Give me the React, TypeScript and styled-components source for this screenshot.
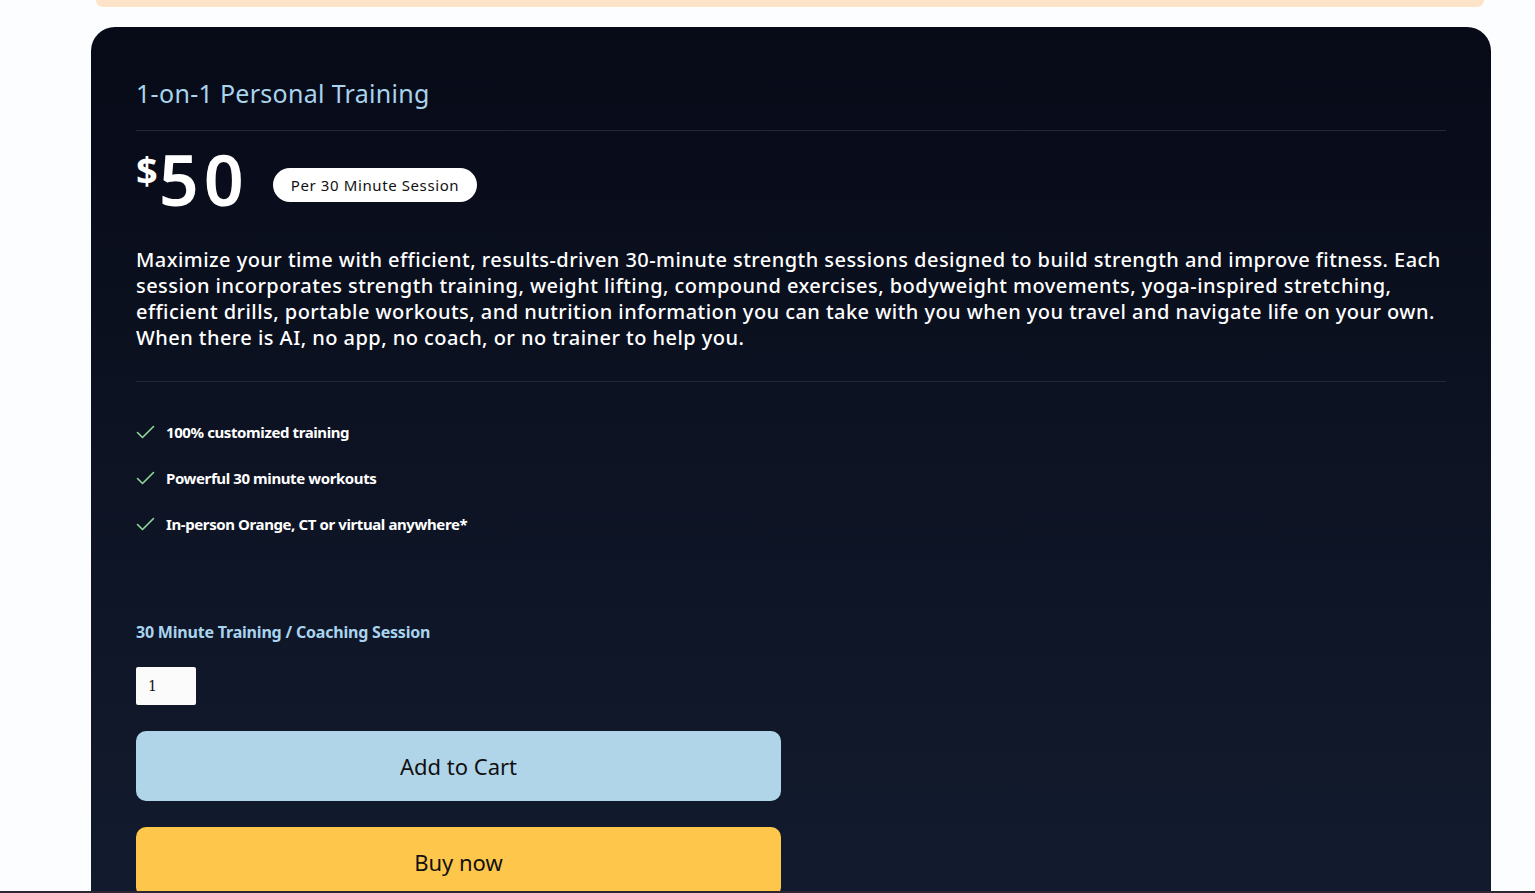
import React from "react";
import styled, { createGlobalStyle } from "styled-components";

const Global = createGlobalStyle`
  html, body { margin: 0; padding: 0; }
  body {
    background: #fcfdff;
    font-family: "Noto Sans", "Open Sans", sans-serif;
    overflow: hidden;
    height: 893px;
  }
`;

const Page = styled.div`
  display: flex;
  flex-direction: column;
  padding: 0 44px 0 91px;
  height: 893px;
`;

const PrevCard = styled.div`
  flex-shrink: 0;
  margin: 0 7px 0 5px;
  height: 7px;
  background: #fde3c8;
  border-radius: 0 0 20px 20px;
`;

const Card = styled.section`
  margin-top: 20px;
  flex: 1;
  border-radius: 24px 24px 0 0;
  background: linear-gradient(180deg, #070a17 0%, #0d1323 50%, #121b2e 100%);
  padding: 48px 45px 0;
  display: flex;
  flex-direction: column;
`;

const Title = styled.h2`
  margin: 0;
  font-family: "Noto Sans", sans-serif;
  font-weight: 400;
  font-size: 25px;
  line-height: 36px;
  color: #a9d4ee;
  letter-spacing: 0.3px;
`;

const Divider = styled.hr<{ $top: number; $bottom: number }>`
  border: 0;
  height: 1px;
  background: #222838;
  margin: ${(p) => `${p.$top}px 0 ${p.$bottom}px`};
`;

const PriceRow = styled.div`
  display: flex;
  align-items: center;
  gap: 24px;
`;

const Price = styled.div`
  display: flex;
  align-items: flex-start;
  color: #fff;
  font-weight: 700;
`;

const Dollar = styled.span`
  font-size: 38px;
  line-height: 40px;
  margin-top: 11px;
  margin-right: 1px;
`;

const Amount = styled.span`
  font-size: 70px;
  line-height: 80px;
  font-weight: 600;
  letter-spacing: 5px;
`;

const Pill = styled.span`
  background: #fff;
  color: #111;
  border-radius: 18px;
  padding: 0 18px;
  height: 34px;
  display: inline-flex;
  align-items: center;
  font-size: 15px;
  letter-spacing: 0.6px;
  margin-top: 12px;
`;

const Description = styled.p`
  margin: 28px 0 0;
  color: #fff;
  font-size: 20px;
  line-height: 26px;
  font-weight: 500;
  letter-spacing: 0.45px;
`;

const Features = styled.ul`
  list-style: none;
  margin: 0;
  padding: 0;
  display: flex;
  flex-direction: column;
  gap: 24px;
`;

const Feature = styled.li`
  display: flex;
  align-items: center;
  gap: 11px;
  color: #fff;
  font-weight: 700;
  font-size: 15px;
  line-height: 22px;
  letter-spacing: -0.4px;
`;

const Label = styled.div`
  margin-top: 86px;
  color: #a9d4ee;
  font-weight: 700;
  font-size: 16px;
  line-height: 22px;
  letter-spacing: -0.2px;
`;

const Qty = styled.input`
  margin-top: 24px;
  width: 60px;
  height: 38px;
  box-sizing: border-box;
  border: 0;
  border-radius: 2px;
  background: #fbfbfb;
  padding: 0 12px;
  font-family: "DejaVu Serif", serif;
  font-size: 14px;
  color: #111;
`;

const Button = styled.button<{ $bg: string }>`
  width: 645px;
  height: 70px;
  border: 0;
  border-radius: 10px;
  background: ${(p) => p.$bg};
  color: #111;
  font-family: "Noto Sans", sans-serif;
  font-size: 22px;
  flex-shrink: 0;
`;

const Buttons = styled.div`
  margin-top: 26px;
  display: flex;
  flex-direction: column;
  gap: 26px;
`;

const BottomLine = styled.div`
  position: fixed;
  left: 0;
  right: 0;
  bottom: 0;
  height: 2px;
  background: #2c2733;
`;

const Check = () => (
  <svg width="19" height="14" viewBox="0 0 19 14" fill="none">
    <path d="M1.5 7.5 L6.5 12.5 L17.5 1.5" stroke="#8fd79a" strokeWidth="1.6" strokeLinecap="round" strokeLinejoin="round" />
  </svg>
);

const features = [
  "100% customized training",
  "Powerful 30 minute workouts",
  "In-person Orange, CT or virtual anywhere*",
];

export default function App() {
  return (
    <>
      <Global />
      <Page>
        <PrevCard />
        <Card>
          <Title>1-on-1 Personal Training</Title>
          <Divider $top={19} $bottom={8} />
          <PriceRow>
            <Price>
              <Dollar>$</Dollar>
              <Amount>50</Amount>
            </Price>
            <Pill>Per 30 Minute Session</Pill>
          </PriceRow>
          <Description>
            Maximize your time with efficient, results-driven 30-minute strength sessions designed to build strength and improve fitness. Each session incorporates strength training, weight lifting, compound exercises, bodyweight movements, yoga-inspired stretching, efficient drills, portable workouts, and nutrition information you can take with you when you travel and navigate life on your own. When there is AI, no app, no coach, or no trainer to help you.
          </Description>
          <Divider $top={30} $bottom={39} />
          <Features>
            {features.map((f) => (
              <Feature key={f}>
                <Check />
                {f}
              </Feature>
            ))}
          </Features>
          <Label>30 Minute Training / Coaching Session</Label>
          <Qty type="number" defaultValue={1} />
          <Buttons>
            <Button $bg="#b1d5e8">Add to Cart</Button>
            <Button $bg="#fec64a">Buy now</Button>
          </Buttons>
        </Card>
      </Page>
      <BottomLine />
    </>
  );
}
